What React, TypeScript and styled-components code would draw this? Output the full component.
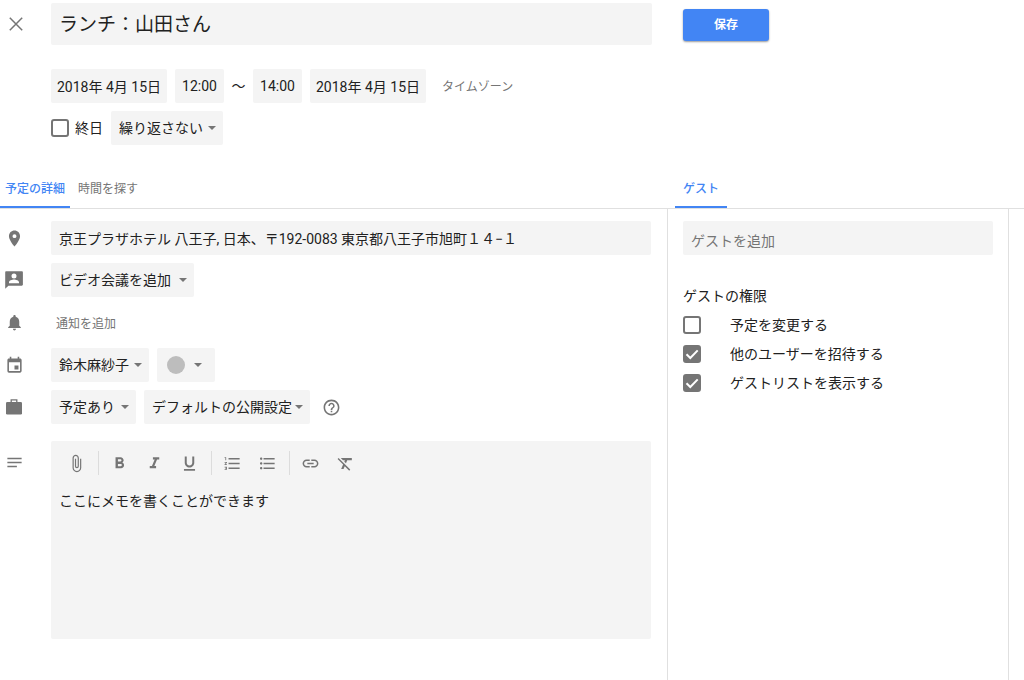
import { useState } from "react";
import type { ReactNode } from "react";
import styled, { createGlobalStyle, css } from "styled-components";
import {
  MdAttachFile,
  MdEvent,
  MdFormatBold,
  MdFormatClear,
  MdFormatItalic,
  MdFormatListBulleted,
  MdFormatListNumbered,
  MdFormatUnderlined,
  MdHelpOutline,
  MdInsertLink,
  MdNotes,
  MdNotifications,
  MdPlace,
} from "react-icons/md";

const color = {
  text: "#212121",
  muted: "#757575",
  field: "#f4f4f4",
  line: "#e0e0e0",
  blue: "#4285f4",
};

const GlobalStyle = createGlobalStyle`
  *, *::before, *::after { box-sizing: border-box; }
  body {
    margin: 0;
    background: #fff;
    color: ${color.text};
    font: 14px/20px Roboto, "Noto Sans CJK JP", sans-serif;
  }
  button, input, select, textarea { font: inherit; color: inherit; margin: 0; }
`;

const columns = css`
  display: grid;
  grid-template-columns: minmax(0, 1fr) 342px 15px;
`;

const Page = styled.div`
  display: flex;
  flex-direction: column;
  min-height: 100vh;
`;

const Header = styled.header`
  ${columns}
  padding: 3px 0 20px;
`;

const HeaderMain = styled.div`
  display: grid;
  grid-template-columns: 51px minmax(0, 1fr);
  row-gap: 8px;
  padding-right: 15px;
`;

const HeaderActions = styled.div`
  padding: 6px 16px;
`;

const IconButton = styled.button`
  display: flex;
  align-items: center;
  justify-content: center;
  width: 32px;
  height: 42px;
  padding: 0;
  border: 0;
  background: none;
  color: ${color.muted};
`;

const fieldBox = css`
  height: 34px;
  border: 0;
  border-radius: 2px;
  background: ${color.field};
  outline-color: ${color.blue};
`;

const TitleInput = styled.input`
  ${fieldBox}
  width: 100%;
  height: 42px;
  padding: 0 8px 3px;
  margin-bottom: 16px;
  font-size: 19px;
`;

const TextInput = styled.input`
  ${fieldBox}
  width: 100%;
  padding: 0 8px;

  &::placeholder {
    color: ${color.muted};
    opacity: 1;
  }
`;

const GuestInput = styled(TextInput)`
  padding-top: 6px;
`;

const DateInput = styled.input<{ $width: number }>`
  ${fieldBox}
  width: ${(p) => p.$width}px;
  padding: 0;
  text-align: center;
`;

const SaveButton = styled.button`
  width: 86px;
  height: 32px;
  padding: 0;
  border: 0;
  border-radius: 3px;
  background: ${color.blue};
  box-shadow: 0 1px 2px rgba(0, 0, 0, 0.4);
  color: #fff;
  font-size: 12px;
  font-weight: 700;
`;

const Line = styled.div`
  grid-column: 2;
  display: flex;
  align-items: center;
  gap: 8px;
  min-height: 34px;
`;

const Tilde = styled.span`
  display: flex;
  justify-content: center;
  width: 13px;
`;

const TextButton = styled.button<{ $indent: number }>`
  padding: 2px 0 0;
  margin-left: ${(p) => p.$indent}px;
  border: 0;
  background: none;
  color: ${color.muted};
  font-size: 12px;
`;

const SelectBox = styled.span<{ $width: number }>`
  display: inline-grid;
  align-items: center;
  width: ${(p) => p.$width}px;

  & > * {
    grid-area: 1 / 1;
  }
`;

const NativeSelect = styled.select`
  ${fieldBox}
  width: 100%;
  padding: 0 16px 0 8px;
  appearance: none;
`;

const Arrow = styled.svg<{ $right: number }>`
  justify-self: end;
  margin-right: ${(p) => p.$right}px;
  pointer-events: none;
`;

const Swatch = styled.span`
  width: 18px;
  height: 18px;
  margin-left: 10px;
  border-radius: 50%;
  background: #bdbdbd;
  pointer-events: none;
`;

const CheckLabel = styled.label<{ $gap: number }>`
  display: flex;
  align-items: center;
  gap: ${(p) => p.$gap}px;
`;

const CheckBoxWrap = styled.span`
  display: grid;

  & > * {
    grid-area: 1 / 1;
  }
`;

const NativeCheck = styled.input`
  width: 18px;
  height: 18px;
  border: 2px solid ${color.muted};
  border-radius: 3px;
  background: #fff;
  appearance: none;

  &:checked {
    background: ${color.muted};
  }
  & + svg {
    visibility: hidden;
    pointer-events: none;
  }
  &:checked + svg {
    visibility: visible;
  }
`;

const TabBar = styled.nav`
  ${columns}
  border-bottom: 1px solid ${color.line};
`;

const TabGroup = styled.div<{ $indent?: number }>`
  display: flex;
  padding-left: ${(p) => p.$indent ?? 0}px;
`;

const Tab = styled.button<{ $active?: boolean; $pad: number }>`
  height: 43px;
  padding: 7px ${(p) => p.$pad}px 0;
  border: 0;
  border-bottom: 2px solid ${(p) => (p.$active ? color.blue : "transparent")};
  background: none;
  color: ${(p) => (p.$active ? color.blue : color.muted)};
  font-size: 12px;
  font-weight: ${(p) => (p.$active ? 500 : 400)};
`;

const Body = styled.main`
  ${columns}
  flex: 1;
`;

const Details = styled.section`
  display: flex;
  flex-direction: column;
  gap: 8px;
  padding: 12px 16px 40px 0;
`;

const DetailRow = styled.div<{ $top?: boolean }>`
  display: grid;
  grid-template-columns: 51px minmax(0, 1fr);
  align-items: ${(p) => (p.$top ? "start" : "center")};
  margin-top: ${(p) => (p.$top ? 9 : 0)}px;
`;

const RowIcon = styled.span`
  display: flex;
  align-items: center;
  justify-content: center;
  width: 28px;
  height: 34px;
  color: ${color.muted};
`;

const NoticeIcon = styled(RowIcon)`
  height: 35px;
`;

const NotesIcon = styled(RowIcon)`
  height: 42px;
`;

const HelpLink = styled.a`
  display: flex;
  margin-left: 4px;
  color: ${color.muted};
`;

const Editor = styled.div`
  border-radius: 2px;
  background: ${color.field};
`;

const Toolbar = styled.div`
  display: flex;
  align-items: center;
  height: 44px;
  padding: 0 8px;
`;

const ToolButton = styled.button`
  display: flex;
  align-items: center;
  justify-content: center;
  width: 35px;
  height: 32px;
  padding: 0;
  border: 0;
  background: none;
  color: ${color.muted};
`;

const Divider = styled.span`
  width: 1px;
  height: 24px;
  margin: 0 3px 0 4px;
  background: #dcdcdc;
`;

const Memo = styled.textarea`
  display: block;
  width: 100%;
  height: 154px;
  padding: 6px 8px;
  border: 0;
  background: none;
  outline-color: ${color.blue};
  resize: none;
`;

const Guests = styled.aside`
  padding: 12px 15px;
  border: solid ${color.line};
  border-width: 0 1px;
`;

const Permissions = styled.fieldset`
  display: flex;
  flex-direction: column;
  gap: 9px;
  min-width: 0;
  margin: 31px 0 0;
  padding: 0;
  border: 0;
`;

const Legend = styled.legend`
  padding: 0;
  margin-bottom: 9px;
`;

const CloseIcon = () => (
  <svg width="16" height="16" viewBox="0 0 16 16" fill="none" stroke="currentColor" strokeWidth="1.5" aria-hidden="true">
    <path d="M1.8 1.8l12.4 12.4M14.2 1.8L1.8 14.2" />
  </svg>
);

const ConferenceIcon = () => (
  <svg width="18" height="18" viewBox="0 0 18 18" fill="currentColor" aria-hidden="true">
    <path
      fillRule="evenodd"
      d="M1.2.3h15.6c.6 0 1.1.5 1.1 1.1v12.2c0 .6-.5 1.1-1.1 1.1H3.4L.2 17.8V1.4C.2.8.6.3 1.2.3zM9 2.4a2.5 2.5 0 1 0 0 5 2.5 2.5 0 0 0 0-5zM4 12.2h10v-.9c0-1.9-3.2-2.8-5-2.8s-5 .9-5 2.8z"
    />
  </svg>
);

const BriefcaseIcon = () => (
  <svg width="18" height="18" viewBox="0 0 18 18" aria-hidden="true">
    <path d="M6.2 4.5V1.9h5.6v2.6" fill="none" stroke="currentColor" strokeWidth="1.3" />
    <rect x="1" y="4" width="16" height="12.6" rx="1.3" fill="currentColor" />
  </svg>
);

interface DropdownProps {
  label: string;
  width: number;
  options: string[];
  arrowRight?: number;
  children?: ReactNode;
}

const Dropdown = ({ label, width, options, arrowRight = 7, children }: DropdownProps) => (
  <SelectBox $width={width}>
    <NativeSelect aria-label={label}>
      {options.map((option) => (
        <option key={option}>{option}</option>
      ))}
    </NativeSelect>
    {children}
    <Arrow $right={arrowRight} width="8" height="4" viewBox="0 0 8 4" fill={color.muted} aria-hidden="true">
      <path d="M0 0h8L4 4z" />
    </Arrow>
  </SelectBox>
);

interface CheckProps {
  label: string;
  gap: number;
  initial?: boolean;
}

const Check = ({ label, gap, initial = false }: CheckProps) => {
  const [checked, setChecked] = useState(initial);
  return (
    <CheckLabel $gap={gap}>
      <CheckBoxWrap>
        <NativeCheck type="checkbox" checked={checked} onChange={(e) => setChecked(e.target.checked)} />
        <svg width="18" height="18" viewBox="0 0 18 18" fill="none" stroke="#fff" strokeWidth="2" aria-hidden="true">
          <path d="M3.5 9.2l3.8 3.8 7.4-7.6" />
        </svg>
      </CheckBoxWrap>
      {label}
    </CheckLabel>
  );
};

export default function App() {
  return (
    <>
      <GlobalStyle />
      <Page>
        <Header>
          <HeaderMain>
            <IconButton type="button" aria-label="閉じる">
              <CloseIcon />
            </IconButton>
            <TitleInput aria-label="タイトル" defaultValue="ランチ：山田さん" />
            <Line>
              <DateInput $width={116} aria-label="開始日" defaultValue="2018年 4月 15日" />
              <DateInput $width={49} aria-label="開始時刻" defaultValue="12:00" />
              <Tilde>〜</Tilde>
              <DateInput $width={49} aria-label="終了時刻" defaultValue="14:00" />
              <DateInput $width={116} aria-label="終了日" defaultValue="2018年 4月 15日" />
              <TextButton type="button" $indent={8}>タイムゾーン</TextButton>
            </Line>
            <Line>
              <Check label="終日" gap={6} />
              <Dropdown label="繰り返し" width={112} options={["繰り返さない"]} />
            </Line>
          </HeaderMain>
          <HeaderActions>
            <SaveButton type="button">保存</SaveButton>
          </HeaderActions>
        </Header>

        <TabBar>
          <TabGroup>
            <Tab type="button" $active $pad={5}>予定の詳細</Tab>
            <Tab type="button" $pad={8}>時間を探す</Tab>
          </TabGroup>
          <TabGroup $indent={8}>
            <Tab type="button" $active $pad={8}>ゲスト</Tab>
          </TabGroup>
        </TabBar>

        <Body>
          <Details>
            <DetailRow>
              <RowIcon><MdPlace size={19} /></RowIcon>
              <TextInput
                aria-label="場所"
                defaultValue="京王プラザホテル 八王子, 日本、〒192-0083 東京都八王子市旭町１４−１"
              />
            </DetailRow>
            <DetailRow>
              <RowIcon><ConferenceIcon /></RowIcon>
              <Line>
                <Dropdown label="ビデオ会議" width={143} options={["ビデオ会議を追加"]} />
              </Line>
            </DetailRow>
            <DetailRow>
              <NoticeIcon><MdNotifications size={19} /></NoticeIcon>
              <Line>
                <TextButton type="button" $indent={5}>通知を追加</TextButton>
              </Line>
            </DetailRow>
            <DetailRow>
              <RowIcon><MdEvent size={19} /></RowIcon>
              <Line>
                <Dropdown label="カレンダー" width={98} options={["鈴木麻紗子"]} />
                <Dropdown label="予定の色" width={58} options={[""]} arrowRight={13}>
                  <Swatch />
                </Dropdown>
              </Line>
            </DetailRow>
            <DetailRow>
              <RowIcon><BriefcaseIcon /></RowIcon>
              <Line>
                <Dropdown label="予定の状態" width={85} options={["予定あり"]} />
                <Dropdown label="公開設定" width={166} options={["デフォルトの公開設定"]} />
                <HelpLink href="#help" aria-label="ヘルプ"><MdHelpOutline size={19} /></HelpLink>
              </Line>
            </DetailRow>
            <DetailRow $top>
              <NotesIcon><MdNotes size={19} /></NotesIcon>
              <Editor>
                <Toolbar role="toolbar" aria-label="書式設定">
                  <ToolButton type="button" aria-label="添付ファイル"><MdAttachFile size={19} /></ToolButton>
                  <Divider />
                  <ToolButton type="button" aria-label="太字"><MdFormatBold size={19} /></ToolButton>
                  <ToolButton type="button" aria-label="斜体"><MdFormatItalic size={19} /></ToolButton>
                  <ToolButton type="button" aria-label="下線"><MdFormatUnderlined size={19} /></ToolButton>
                  <Divider />
                  <ToolButton type="button" aria-label="番号付きリスト"><MdFormatListNumbered size={19} /></ToolButton>
                  <ToolButton type="button" aria-label="箇条書き"><MdFormatListBulleted size={19} /></ToolButton>
                  <Divider />
                  <ToolButton type="button" aria-label="リンク"><MdInsertLink size={19} /></ToolButton>
                  <ToolButton type="button" aria-label="書式をクリア"><MdFormatClear size={19} /></ToolButton>
                </Toolbar>
                <Memo aria-label="説明" defaultValue="ここにメモを書くことができます" />
              </Editor>
            </DetailRow>
          </Details>

          <Guests>
            <GuestInput aria-label="ゲスト" placeholder="ゲストを追加" />
            <Permissions>
              <Legend>ゲストの権限</Legend>
              <Check label="予定を変更する" gap={29} />
              <Check label="他のユーザーを招待する" gap={29} initial />
              <Check label="ゲストリストを表示する" gap={29} initial />
            </Permissions>
          </Guests>
        </Body>
      </Page>
    </>
  );
}
